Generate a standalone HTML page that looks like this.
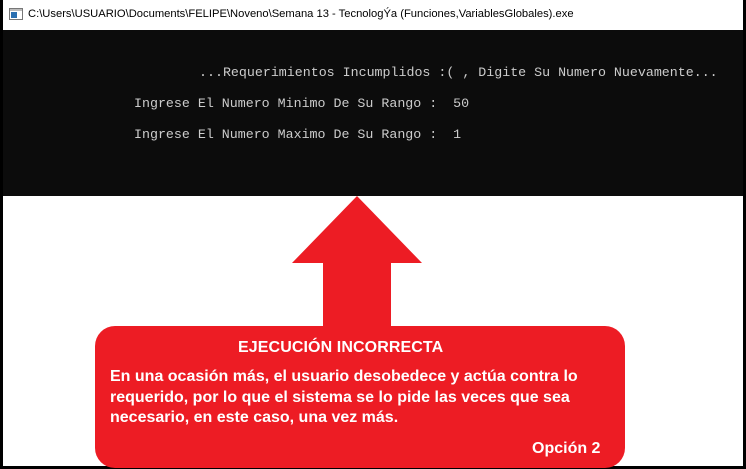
<html><head><style>
body{margin:0;width:746px;height:469px;background:#000;position:relative;overflow:hidden;font-family:"Liberation Sans",sans-serif}
#tb{position:absolute;left:3px;top:0;width:740px;height:30px;background:#fff}
#tb span{position:absolute;left:25px;top:8px;font-size:11.2px;color:#000}
#con{position:absolute;left:3px;top:30px;width:740px;height:166px;background:#0c0c0c;font-family:"Liberation Mono",monospace;font-size:13.3px;color:#cccccc}
#con div{position:absolute;white-space:pre}
#wh{position:absolute;left:3px;top:196px;width:740px;height:270px;background:#fff}
.t{position:absolute;color:#fff;font-weight:bold;white-space:pre}
</style></head><body>
<div id="tb"><svg style="position:absolute;left:6px;top:8px" width="14" height="12"><rect x="0.5" y="0.5" width="13" height="11" fill="#fff" stroke="#777"/><rect x="1" y="1" width="12" height="2" fill="#bbb"/><rect x="2" y="4" width="6" height="6" fill="#2a6fb0"/></svg><span>C:\Users\USUARIO\Documents\FELIPE\Noveno\Semana 13 - TecnologÝa (Funciones,VariablesGlobales).exe</span></div>
<div id="con">
<div style="left:196px;top:35px">...Requerimientos Incumplidos :( , Digite Su Numero Nuevamente...</div>
<div style="left:131px;top:66px">Ingrese El Numero Minimo De Su Rango :  50</div>
<div style="left:131px;top:97px">Ingrese El Numero Maximo De Su Rango :  1</div>
</div>
<div id="wh"></div>
<svg style="position:absolute;left:0;top:0" width="746" height="469">
<polygon points="357,196 422,263 391,263 391,330 323,330 323,263 292,263" fill="#ed1c24"/>
<rect x="95" y="326" width="530" height="142" rx="20" fill="#ed1c24"/>
</svg>
<div class="t" style="left:238px;top:339px;font-size:16px;letter-spacing:0.1px">EJECUCIÓN INCORRECTA</div>
<div class="t" style="left:110px;top:367px;font-size:16px;line-height:20.5px">En una ocasión más, el usuario desobedece y actúa contra lo
requerido, por lo que el sistema se lo pide las veces que sea
necesario, en este caso, una vez más.</div>
<div class="t" style="left:532px;top:440px;font-size:16px">Opción 2</div>
</body></html>
